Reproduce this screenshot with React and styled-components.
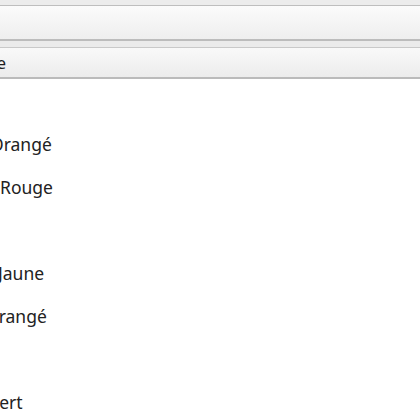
import React from "react";
import styled, { createGlobalStyle } from "styled-components";

const Global = createGlobalStyle`
  html, body {
    margin: 0;
    background: #ffffff;
  }
  body {
    font-family: "Noto Sans", "Open Sans", sans-serif;
    color: #222222;
  }
`;

const Viewport = styled.div`
  width: 420px;
  height: 420px;
  overflow: hidden;
`;

const TopStrip = styled.div`
  height: 5px;
  background: #ececec;
  border-bottom: 1px solid #bebebe;
`;

const Toolbar = styled.div`
  height: 33px;
  background: linear-gradient(#fbfbfb, #eeeeee);
  border-bottom: 2px solid #bcbcbc;
`;

const Spacer = styled.div`
  height: 6px;
  background: #ebebeb;
  border-bottom: 1px solid #c9c9c9;
`;

const Header = styled.div`
  height: 29px;
  display: flex;
  align-items: center;
  background: linear-gradient(#f9f9f9, #ececec);
  border-bottom: 2px solid #bbbbbb;
  font-size: 17px;
  color: #1e1e1e;
  overflow: hidden;
`;

const HeaderLabel = styled.span`
  width: 80px;
  margin-left: -74px;
  text-align: right;
  flex-shrink: 0;
`;

const List = styled.ul`
  list-style: none;
  margin: 0;
  padding: 1px 0 0;
`;

const Row = styled.li`
  height: 43px;
  line-height: 43px;
  font-size: 17.5px;
  white-space: nowrap;
  color: #222222;
`;

const Label = styled.span`
  display: inline-block;
  margin-left: ${(p) => p.offset || 0}px;
`;

const rows = [
  { text: "", offset: 0 },
  { text: "Orangé", offset: -10 },
  { text: "Rouge", offset: 0 },
  { text: "", offset: 0 },
  { text: "Jaune", offset: -2 },
  { text: "Orangé", offset: -15 },
  { text: "", offset: 0 },
  { text: "Vert", offset: -11 },
];

export default function App() {
  return (
    <Viewport>
      <Global />
      <TopStrip />
      <Toolbar />
      <Spacer />
      <Header>
        <HeaderLabel>Nuance</HeaderLabel>
      </Header>
      <List>
        {rows.map((r, i) => (
          <Row key={i}>
            <Label offset={r.offset}>{r.text}</Label>
          </Row>
        ))}
      </List>
    </Viewport>
  );
}
